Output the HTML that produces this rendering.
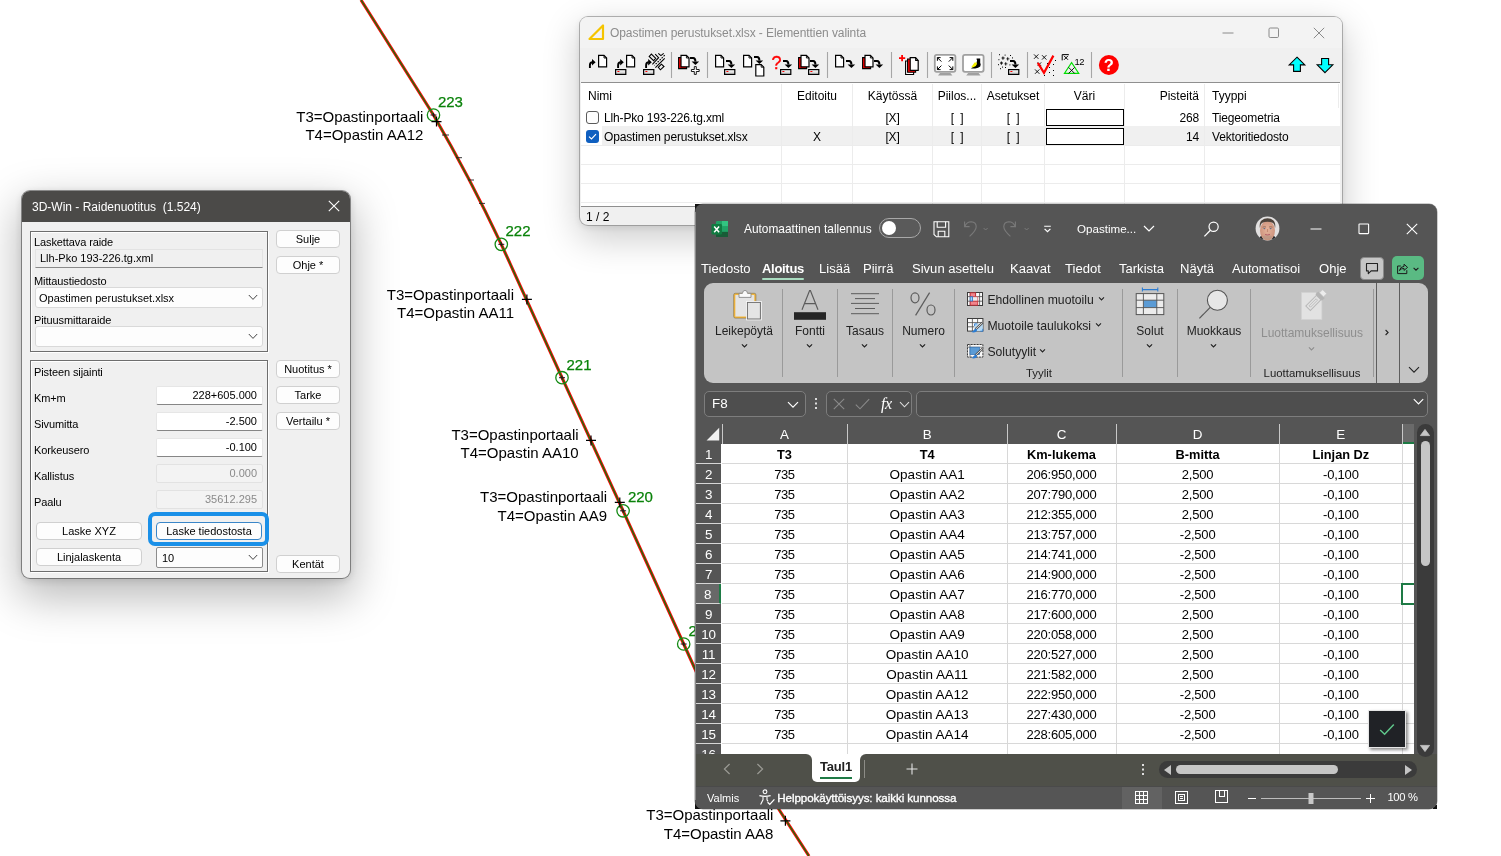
<!DOCTYPE html>
<html>
<head>
<meta charset="utf-8">
<title>3D-Win</title>
<style>
*{box-sizing:border-box;margin:0;padding:0}
html,body{width:1501px;height:856px;overflow:hidden;background:#fff;font-family:"Liberation Sans",sans-serif;}
body{position:relative}
#bg,#dlg,#tw,#xl{will-change:transform;transform:translateZ(0)}
.abs{position:absolute}
#bg{position:absolute;left:0;top:0;width:1501px;height:856px}
#bg text{font-family:"Liberation Sans",sans-serif;font-size:15px}

/* ---------- left dialog ---------- */
#dlg{position:absolute;left:22px;top:191px;width:328px;height:387px;background:#f0f0f0;border-radius:8px;
 box-shadow:0 0 0 1px rgba(60,60,60,.55),0 16px 44px 4px rgba(0,0,0,.27),0 2px 10px rgba(0,0,0,.14);overflow:hidden;font-size:11px;color:#000}
#dlg .tb{position:absolute;left:0;top:0;width:100%;height:30.6px;background:#4b4a48;color:#fff;font-size:12px;line-height:32px;padding-left:10px;white-space:pre}
#dlg .grp{position:absolute;border:1px solid #6e6e6e;box-shadow:inset 1px 1px 0 #fff, 1px 1px 0 #fff}
#dlg .lb{position:absolute;white-space:nowrap;line-height:13px;height:13px;letter-spacing:-0.1px}
#dlg .btn{position:absolute;height:18px;background:#fdfdfd;border:1px solid #d0d0d0;border-radius:4px;text-align:center;line-height:16.5px;font-size:11px;white-space:nowrap}
#dlg .inp{position:absolute;height:19px;background:#fff;border:1px solid #e6e6e6;border-bottom:1px solid #868686;border-radius:2px;text-align:right;line-height:16px;padding-right:5px;font-size:11px}
#dlg .inp.dis{background:#f3f3f3;border:1px solid #e2e2e2;color:#8a8a8a}
#dlg .ro{position:absolute;height:19px;background:#f0f0f0;border:1px solid #e3e3e3;border-bottom:1px solid #8a8a8a;line-height:16px;padding-left:4px;font-size:11px}
#dlg .cmb{position:absolute;height:21px;background:#fdfdfd;border:1px solid #d9d9d9;border-radius:3px;line-height:20px;padding-left:3px;font-size:11px}
#dlg .cmb svg{position:absolute;right:4px;top:6px}
</style>
</head>
<body>

<!-- ================= CAD background ================= -->
<svg id="bg" viewBox="0 0 1501 856">
 <g fill="none" stroke-linecap="butt" stroke-linejoin="round">
  <path id="rail" d="M361,0 L433.5,115 Q470,178 501.3,244.3 L562,377.7 L623.1,510.8 L683.7,644 L700,680 Q740,760 778,808 L809,856" stroke="#fa0808" stroke-width="3.1"/>
  <path d="M361,0 L433.5,115 Q470,178 501.3,244.3 L562,377.7 L623.1,510.8 L683.7,644 L700,680 Q740,760 778,808 L809,856" stroke="#0a7a0a" stroke-width="1.25"/>
 </g>
 <g fill="none" stroke="#138a13" stroke-width="1.3">
  <circle cx="433.5" cy="115" r="6.2"/><circle cx="501.3" cy="244.3" r="6.2"/><circle cx="562" cy="377.7" r="6.2"/><circle cx="623.1" cy="510.8" r="6.2"/><circle cx="683.7" cy="644" r="6.2"/>
 </g>
 <g stroke="#1a1a1a" stroke-width="1">
  <path d="M430.5,115h6M498.3,244.3h6M559,377.7h6M620.1,510.8h6M680.7,644h6M433.5,113v4M501.3,242.3v4M562,375.7v4M623.1,508.8v4M683.7,642v4"/>
 </g>
 <g fill="#0a820a" stroke="#0a820a" stroke-width="0.25">
  <text x="437.9" y="107">223</text><text x="505.5" y="236.2">222</text><text x="566.5" y="369.5">221</text><text x="627.9" y="502.4">220</text><text x="688.4" y="636">219</text>
 </g>
 <g stroke="#000" stroke-width="1.2">
  <path d="M431.5,121.6h10M436.5,116.6v10 M521.9,299.4h10M526.9,294.4v10 M586,440.4h10M591,435.4v10 M614.8,502.4h10M619.8,497.4v10 M780.4,820.8h10M785.4,815.8v10"/>
 </g>
 <g stroke="#222" stroke-width="0.9">
  <path d="M442,135h7M456,157.7h6M468,180h6M479,203.4h6"/>
 </g>
 <g fill="#000" text-anchor="end">
  <text x="423.4" y="121.6">T3=Opastinportaali</text><text x="423.4" y="139.6">T4=Opastin AA12</text>
  <text x="514" y="299.6">T3=Opastinportaali</text><text x="514" y="317.6">T4=Opastin AA11</text>
  <text x="578.6" y="439.9">T3=Opastinportaali</text><text x="578.6" y="457.7">T4=Opastin AA10</text>
  <text x="607.2" y="502.4">T3=Opastinportaali</text><text x="607.2" y="520.5">T4=Opastin AA9</text>
  <text x="773.4" y="820.4">T3=Opastinportaali</text><text x="773.4" y="838.7">T4=Opastin AA8</text>
 </g>
</svg>

<!-- ================= Left dialog: Raidenuotitus ================= -->
<div id="dlg">
 <div class="tb">3D-Win - Raidenuotitus  (1.524)</div>
 <svg class="abs" style="left:306px;top:9px" width="12" height="12" viewBox="0 0 12 12"><path d="M0.8,0.8L11.2,11.2M11.2,0.8L0.8,11.2" stroke="#fff" stroke-width="1.1" fill="none"/></svg>

 <div class="grp" style="left:8px;top:40px;width:238px;height:121px"></div>
 <div class="lb" style="left:12px;top:45px">Laskettava raide</div>
 <div class="ro" style="left:13px;top:58px;width:228px">Llh-Pko 193-226.tg.xml</div>
 <div class="lb" style="left:12px;top:84px">Mittaustiedosto</div>
 <div class="cmb" style="left:13px;top:96px;width:228px">Opastimen perustukset.xlsx<svg width="10" height="7" viewBox="0 0 10 7"><path d="M0.8,1L5,5.4L9.2,1" stroke="#444" stroke-width="1" fill="none"/></svg></div>
 <div class="lb" style="left:12px;top:123px">Pituusmittaraide</div>
 <div class="cmb" style="left:13px;top:135px;width:228px"><svg width="10" height="7" viewBox="0 0 10 7"><path d="M0.8,1L5,5.4L9.2,1" stroke="#444" stroke-width="1" fill="none"/></svg></div>

 <div class="btn" style="left:254px;top:39px;width:64px">Sulje</div>
 <div class="btn" style="left:254px;top:65px;width:64px">Ohje *</div>

 <div class="grp" style="left:8px;top:169px;width:238px;height:212px"></div>
 <div class="lb" style="left:12px;top:175px">Pisteen sijainti</div>
 <div class="lb" style="left:12px;top:201px">Km+m</div>
 <div class="lb" style="left:12px;top:227px">Sivumitta</div>
 <div class="lb" style="left:12px;top:253px">Korkeusero</div>
 <div class="lb" style="left:12px;top:279px">Kallistus</div>
 <div class="lb" style="left:12px;top:305px">Paalu</div>
 <div class="inp" style="left:134px;top:195px;width:107px">228+605.000</div>
 <div class="inp" style="left:134px;top:221px;width:107px">-2.500</div>
 <div class="inp" style="left:134px;top:247px;width:107px">-0.100</div>
 <div class="inp dis" style="left:134px;top:273px;width:107px">0.000</div>
 <div class="inp dis" style="left:134px;top:299px;width:107px">35612.295</div>

 <div class="btn" style="left:14px;top:331px;width:106px">Laske XYZ</div>
 <div class="abs" style="left:126px;top:321px;width:121px;height:34px;border:4px solid #1a90e8;border-radius:7px;background:#f0f0f0"></div>
 <div class="btn" style="left:134px;top:331px;width:106px;border-color:#3a86c8">Laske tiedostosta</div>
 <div class="btn" style="left:14px;top:357px;width:106px">Linjalaskenta</div>
 <div class="cmb" style="left:134px;top:356px;width:107px;border-color:#8c8c8c;border-radius:2px;padding-left:5px">10<svg width="10" height="7" viewBox="0 0 10 7"><path d="M0.8,1L5,5.4L9.2,1" stroke="#444" stroke-width="1" fill="none"/></svg></div>

 <div class="btn" style="left:254px;top:169px;width:64px">Nuotitus *</div>
 <div class="btn" style="left:254px;top:195px;width:64px">Tarke</div>
 <div class="btn" style="left:254px;top:221px;width:64px">Vertailu *</div>
 <div class="btn" style="left:254px;top:364px;width:64px">Kentät</div>
</div>

<!-- ================= Top window: Elementtien valinta ================= -->
<style>
#tw{position:absolute;left:580px;top:17px;width:762px;height:208px;background:#f0f0f0;border-radius:8px;
 box-shadow:0 0 0 1px rgba(120,120,120,.55),0 12px 36px 2px rgba(0,0,0,.20),0 2px 8px rgba(0,0,0,.10);overflow:hidden;font-size:12px;color:#000}
#tw .tb{position:absolute;left:0;top:0;width:100%;height:31px;background:#f3f3f3;color:#8c8c8c;font-size:12px;line-height:33px;padding-left:30px;white-space:pre;letter-spacing:-0.07px}
#tw .lv{position:absolute;left:1px;top:65px;width:759px;height:125px;background:#fff;border-top:1px solid #8f8f8f;border-bottom:1px solid #8f8f8f}
#tw .hd,#tw .c{position:absolute;white-space:nowrap;line-height:16px;height:16px;font-size:12px}
#tw .c{letter-spacing:-0.15px}
#tw .vl{position:absolute;top:1px;width:1px;height:123px;background:#ececec}
#tw .hl{position:absolute;left:0;width:759px;height:1px;background:#ececec}
#tw .sep{position:absolute;top:42px;width:1px;height:26px;background:#a8a8a8}
#tw .ic{position:absolute;top:36px}
</style>
<div id="tw">
 <div class="tb">Opastimen perustukset.xlsx - Elementtien valinta</div>
 <svg class="abs" style="left:8px;top:7px" width="17" height="17" viewBox="0 0 17 17"><path d="M15,1.5V15H1.5Z" fill="none" stroke="#f5c400" stroke-width="2.2" stroke-linejoin="round"/></svg>
 <svg class="abs" style="left:642px;top:10px" width="12" height="12" viewBox="0 0 12 12"><path d="M0.5,6H11.5" stroke="#8a8a8a" stroke-width="1" fill="none"/></svg>
 <svg class="abs" style="left:688px;top:10px" width="12" height="12" viewBox="0 0 12 12"><rect x="1" y="1" width="9.5" height="9.5" rx="1.2" stroke="#8a8a8a" stroke-width="1" fill="none"/></svg>
 <svg class="abs" style="left:733px;top:10px" width="12" height="12" viewBox="0 0 12 12"><path d="M0.8,0.8L11.2,11.2M11.2,0.8L0.8,11.2" stroke="#8a8a8a" stroke-width="1" fill="none"/></svg>

 <svg class="abs" style="left:0;top:0" width="762" height="208" viewBox="580 17 762 208">
  <defs>
   <linearGradient id="drv" x1="0" y1="0" x2="0" y2="1"><stop offset="0" stop-color="#fff"/><stop offset="1" stop-color="#c4c4c4"/></linearGradient>
   <g id="pg"><path d="M0.6,0.6h5.4l2.6,2.6v8.8h-8z" fill="#fff" stroke="#000" stroke-width="1.2" stroke-linejoin="miter"/><path d="M6,0.6v2.6h2.6" fill="none" stroke="#000" stroke-width="0.9"/></g>
   <g id="pg2"><path d="M0.6,2.8h8v11h-8z" fill="#ff0000" stroke="#000" stroke-width="1.1"/><use href="#pg" x="2.4" y="0"/></g>
   <g id="dr"><rect x="0.6" y="0.6" width="10.2" height="4.8" fill="url(#drv)" stroke="#000" stroke-width="1.2"/><path d="M2.4,2.5h2" stroke="#ff0000" stroke-width="1"/></g>
   <g id="aUR"><path d="M1.7,9.6V6.8Q1.7,3.9 4.4,3.9" fill="none" stroke="#000" stroke-width="1.9"/><path d="M3.8,0.7L7.4,3.9L3.8,7.1z" fill="#000"/></g>
   <g id="aRD"><path d="M0,1H3.2Q5.4,1 5.4,4.6" fill="none" stroke="#000" stroke-width="2"/><path d="M1.6,4.4H9.2L5.4,8z" fill="#000"/></g>
  </defs>
  <g stroke="#a6a6a6" stroke-width="1.1"><path d="M671.5,52v26M707.5,52v26M827.5,52v26M891.5,52v26M927.5,52v26M991.5,52v26M1027.5,52v26M1091.5,52v26"/></g>
  <!-- 1 -->
  <use href="#aUR" x="588.2" y="58.4"/><use href="#pg" x="598" y="54.8"/>
  <!-- 2 -->
  <use href="#aUR" x="616.4" y="58.4"/><use href="#pg" x="626" y="54.8"/><use href="#dr" x="615" y="69"/>
  <!-- 3 -->
  <use href="#aUR" x="644.4" y="58.4"/><use href="#dr" x="643" y="69"/>
  <g stroke="#000" stroke-width="1.1" fill="none"><path d="M651.4,54.1L655.7,58.3L653.6,60.6L649.2,56.4z M655.2,54.1L658.6,57.7L652.4,64.4 M658.3,53.3L660.9,55.6L663.7,53.3 M664.7,58.3L655.4,67.7 M661.4,64.2L664,66.5L660.4,69.8L658.3,67.3z"/><path d="M664.7,55.2L654.4,65.4" stroke-dasharray="1.6 1.2"/></g>
  <!-- 4 -->
  <use href="#pg2" x="678" y="54.8"/><use href="#aRD" x="690" y="57"/>
  <path d="M694.3,66.6h2v2.9h2.9v2h-2.9v2.9h-2v-2.9h-2.9v-2h2.9z" fill="#fff" stroke="#000" stroke-width="0.9"/>
  <!-- 5 -->
  <use href="#pg" x="715" y="54.8"/><use href="#aRD" x="726" y="60"/><use href="#dr" x="724" y="69"/>
  <!-- 6 -->
  <use href="#pg" x="743" y="54.8"/><use href="#aRD" x="754" y="56"/><use href="#pg" x="755.2" y="64"/>
  <!-- 7 -->
  <text x="771.4" y="68.8" font-family="Liberation Sans" font-size="18" fill="#ff0000" stroke="#ff0000" stroke-width="0.35">?</text>
  <use href="#aRD" x="783" y="60"/><use href="#dr" x="780" y="69"/>
  <!-- 8 -->
  <use href="#pg2" x="798" y="54.8"/><use href="#aRD" x="810" y="60"/><use href="#dr" x="808" y="69"/>
  <!-- 9 -->
  <use href="#pg" x="835" y="54.8"/><use href="#aRD" x="846" y="60"/>
  <!-- 10 -->
  <use href="#pg2" x="862" y="54.8"/><use href="#aRD" x="874" y="60"/>
  <!-- 11 -->
  <path d="M899,58.1h6.2M902.1,55v6.2" stroke="#ff0000" stroke-width="1.8"/>
  <path d="M905.6,61h8v13.5h-8z" fill="#fff" stroke="#000" stroke-width="1.1"/>
  <path d="M907.6,59h8v13.3h-8z" fill="#ff0000" stroke="#000" stroke-width="1.1"/>
  <g transform="translate(909.6,57) scale(1,1.12)"><use href="#pg"/></g>
  <!-- 12 monitor -->
  <g>
   <rect x="934.8" y="54.8" width="20.6" height="17" rx="2" fill="#fff" stroke="#a0a0a0" stroke-width="1.8"/><path d="M940,73h10.4l2,2.6h-14.4z" fill="#a0a0a0"/>
   <g stroke="#000" stroke-width="1" fill="none"><path d="M937.4,57.6l4,4M937.4,60.8v-3.2h3.2 M952.8,57.6l-4,4M949.6,57.6h3.2v3.2 M937.4,69.6l4,-4M937.4,66.4v3.2h3.2 M952.8,69.6l-4,-4M952.8,66.4v3.2h-3.2"/></g>
  </g>
  <!-- 13 monitor -->
  <g>
   <rect x="963" y="54.8" width="20.6" height="17" rx="2" fill="#fff" stroke="#a0a0a0" stroke-width="1.8"/><path d="M968.2,73h10.4l2,2.6h-14.4z" fill="#a0a0a0"/>
   <path d="M966.4,68.4h4.6q2.6,-1.4 3.4,-5h2.2v-4.8h3.6v4.2q1,1.4 0,3.8q-2,2 -5.6,1.8z" fill="#000"/>
   <path d="M971.2,67.2l3.4,-4.6h2l0.4,1.4q-0.6,2.2 -3.6,3.2z" fill="#f4f000"/>
   <rect x="975.2" y="59.8" width="1.8" height="1.8" fill="#fff"/>
  </g>
  <!-- 14 -->
  <g fill="#000"><path d="M1001.6,57.6h0.9v-1.2h0.9v1.2h1.2v0.9h-1.2v1.2h-0.9v-1.2h-0.9zM1006.4,58.4h0.9v-1.2h0.9v1.2h1.2v0.9h-1.2v1.2h-0.9v-1.2h-0.9zM1000,62.6h0.9v-1.2h0.9v1.2h1.2v0.9h-1.2v1.2h-0.9v-1.2h-0.9zM1004.4,63.4h0.9v-1.2h0.9v1.2h1.2v0.9h-1.2v1.2h-0.9v-1.2h-0.9z"/>
   <rect x="999" y="54.2" width="1" height="1"/><rect x="1004.6" y="54.6" width="1" height="1"/><rect x="1010" y="55" width="1" height="1"/><rect x="1012" y="57.4" width="1" height="1"/><rect x="998.4" y="59.2" width="1" height="1"/><rect x="998" y="64.2" width="1" height="1"/><rect x="1002" y="66.6" width="1" height="1"/><rect x="1005" y="67" width="1" height="1"/><rect x="1000" y="68.2" width="1" height="1"/><rect x="1009.4" y="64.4" width="1" height="1"/></g>
  <use href="#aRD" x="1010" y="60"/><use href="#dr" x="1008" y="69"/>
  <!-- 15 -->
  <g stroke="#000" stroke-width="0.9" fill="none"><path d="M1034,54.4l4.4,4.4M1038.4,54.4l-4.4,4.4 M1042,55.2l4.4,4.4M1046.4,55.2l-4.4,4.4 M1035,69.4l4.4,4.4M1039.4,69.4l-4.4,4.4 M1037.6,62.4l3.6,3.6M1041.2,62.4l-3.6,3.6"/></g>
  <g fill="#000"><rect x="1055" y="60" width="1" height="1"/><rect x="1053" y="64" width="1" height="1"/><rect x="1049" y="67" width="1" height="1"/><rect x="1053" y="70" width="1" height="1"/><rect x="1049" y="72" width="1" height="1"/><rect x="1044" y="75" width="1" height="1"/><rect x="1053" y="75" width="1" height="1"/><rect x="1047" y="63" width="1" height="1"/></g>
  <path d="M1037.8,62.8L1044,72.8L1053.4,55.6" fill="none" stroke="#ff0000" stroke-width="2.2" stroke-linejoin="miter"/>
  <!-- 16 -->
  <path d="M1062.2,60.4v-5.8h6.6" fill="none" stroke="#000" stroke-width="1"/>
  <path d="M1064,55.8l4,4M1068,55.8l-4,4" stroke="#000" stroke-width="1" fill="none"/>
  <path d="M1071.6,62.6L1078.8,73.4H1064.4z" fill="none" stroke="#00e000" stroke-width="1.1"/>
  <path d="M1068.6,67.4l6,6M1074.6,67.4l-6,6" stroke="#000" stroke-width="0.9" fill="none"/>
  <text x="1074.6" y="64.8" font-family="Liberation Sans" font-size="9.4" letter-spacing="-0.6" fill="#000">12</text>
  <!-- help -->
  <circle cx="1108.9" cy="65" r="10" fill="#ff0000"/>
  <text x="1108.9" y="71" text-anchor="middle" font-family="Liberation Sans" font-weight="700" font-size="16.5" fill="#fff">?</text>
  <!-- arrows -->
  <path d="M1297,57.2L1304.8,64.9H1300.4V71.4H1293.6V64.9H1289.2z" fill="#00ffff" stroke="#000" stroke-width="1.1" stroke-linejoin="miter"/>
  <path d="M1325,72.6L1332.8,64.8H1328.6V58.5H1321.6V64.8H1317.2z" fill="#00ffff" stroke="#000" stroke-width="1.1" stroke-linejoin="miter"/>
 </svg>


 <div class="lv">
  <div class="abs" style="left:0;top:43px;width:759px;height:20px;background:#f0f0f0"></div><div class="abs" style="left:0;top:43px;width:21px;height:20px;background:#fff"></div>
  <div class="vl" style="left:200px"></div><div class="vl" style="left:271px"></div><div class="vl" style="left:351px"></div><div class="vl" style="left:400px"></div><div class="vl" style="left:463px"></div><div class="vl" style="left:543px"></div><div class="vl" style="left:623px"></div><div class="vl" style="left:757px;height:24px"></div>
  <div class="hl" style="top:62px"></div><div class="hl" style="top:81px"></div><div class="hl" style="top:100px"></div><div class="hl" style="top:119px"></div>

  <div class="hd" style="left:7px;top:5px">Nimi</div>
  <div class="hd" style="left:201px;top:5px;width:70px;text-align:center">Editoitu</div>
  <div class="hd" style="left:272px;top:5px;width:79px;text-align:center">Käytössä</div>
  <div class="hd" style="left:352px;top:5px;width:48px;text-align:center">Piilos...</div>
  <div class="hd" style="left:401px;top:5px;width:62px;text-align:center">Asetukset</div>
  <div class="hd" style="left:464px;top:5px;width:79px;text-align:center">Väri</div>
  <div class="hd" style="left:544px;top:5px;width:74px;text-align:right">Pisteitä</div>
  <div class="hd" style="left:631px;top:5px">Tyyppi</div>

  <!-- row 1 -->
  <div class="abs" style="left:5px;top:28px;width:13px;height:13px;border:1px solid #5a5a5a;border-radius:3px;background:#fdfdfd"></div>
  <div class="c" style="left:23px;top:27px">Llh-Pko 193-226.tg.xml</div>
  <div class="c" style="left:272px;top:27px;width:79px;text-align:center">[X]</div>
  <div class="c" style="left:352px;top:27px;width:48px;text-align:center">[&nbsp; ]</div>
  <div class="c" style="left:401px;top:27px;width:62px;text-align:center">[&nbsp; ]</div>
  <div class="abs" style="left:465px;top:26px;width:78px;height:17px;border:1px solid #000;background:#fff;box-shadow:inset 0 0 0 0 #000"></div>
  <div class="c" style="left:544px;top:27px;width:74px;text-align:right">268</div>
  <div class="c" style="left:631px;top:27px">Tiegeometria</div>
  <!-- row 2 -->
  <div class="abs" style="left:5px;top:47px;width:13px;height:13px;border-radius:3px;background:#0f5fc0"></div>
  <svg class="abs" style="left:5px;top:47px" width="13" height="13" viewBox="0 0 13 13"><path d="M3,6.6L5.5,9L10,4.2" stroke="#fff" stroke-width="1.1" fill="none"/></svg>
  <div class="c" style="left:23px;top:46px">Opastimen perustukset.xlsx</div>
  <div class="c" style="left:201px;top:46px;width:70px;text-align:center">X</div>
  <div class="c" style="left:272px;top:46px;width:79px;text-align:center">[X]</div>
  <div class="c" style="left:352px;top:46px;width:48px;text-align:center">[&nbsp; ]</div>
  <div class="c" style="left:401px;top:46px;width:62px;text-align:center">[&nbsp; ]</div>
  <div class="abs" style="left:465px;top:45px;width:78px;height:17px;border:1px solid #000;background:#fff"></div>
  <div class="c" style="left:544px;top:46px;width:74px;text-align:right">14</div>
  <div class="c" style="left:631px;top:46px">Vektoritiedosto</div>
 </div>
 <div class="c" style="left:6px;top:192px;font-size:12px;letter-spacing:0">1 / 2</div>
</div>


<!-- ================= Excel window ================= -->
<style>
#xl{position:absolute;left:695px;top:204px;width:742px;height:605px;background:#555555;border-radius:8px 8px 8px 8px;overflow:hidden;color:#fff;font-size:12px;
 box-shadow:0 0 0 0.5px rgba(60,60,60,.5)}
#xl .t{position:absolute;white-space:nowrap;line-height:16px;height:16px}
#xl .tab{position:absolute;top:56px;font-size:13.05px;line-height:18px;height:18px;white-space:nowrap;color:#fff}
#rb{position:absolute;left:9px;top:79px;width:724px;height:100px;background:#c4c4c4;border-radius:9px;color:#1f1f1f;overflow:hidden}
#rb .sp{position:absolute;top:6px;width:1px;height:88px;background:#9a9a9a}
#rb .bl{position:absolute;font-size:12px;line-height:16px;height:16px;white-space:nowrap;text-align:center;color:#222}
#rb .sm{position:absolute;font-size:12.2px;line-height:16px;height:16px;white-space:nowrap;color:#222}
#rb .gl{position:absolute;font-size:11.4px;line-height:14px;height:14px;white-space:nowrap;color:#222;text-align:center}
#grid{position:absolute;left:1px;top:220px;width:718px;height:330px;background:#fff;overflow:hidden;color:#000}
#grid .ch{position:absolute;top:0;height:20px;background:#555555;color:#fff;font-size:13.4px;line-height:22px;text-align:center}
#grid .rh{position:absolute;left:0;width:25px;letter-spacing:-0.3px;height:20px;background:#555555;color:#fff;font-size:13.4px;line-height:21px;text-align:center;border-bottom:1px solid #d6d6d6}
#grid .cl{position:absolute;height:20px;font-size:13.5px;line-height:22px;text-align:center;white-space:nowrap;color:#000}
#grid .b{font-weight:700;font-size:12.8px}
#grid .n{font-size:13px;letter-spacing:-0.2px}
#grid .na{font-size:13px;letter-spacing:-0.4px}
#grid .vg{position:absolute;width:1px;background:#d8d8d8;top:20px;height:320px}
#grid .hg{position:absolute;height:1px;background:#d8d8d8;left:25.5px;width:693px}
</style>
<div class="abs" style="left:694.5px;top:203.5px;width:8px;height:8px;background:#111"></div><div class="abs" style="left:1432.5px;top:804.5px;width:4.6px;height:4.4px;background:#111"></div><div class="abs" style="left:694.6px;top:802px;width:6px;height:7px;background:#111"></div>
<div id="xl">
<!-- title bar -->
<div class="abs" style="left:0;top:8px;width:1px;height:588px;background:#8a8a8a;z-index:5"></div>
<svg class="abs" style="left:16px;top:16px" width="18" height="18" viewBox="0 0 18 18">
 <rect x="5" y="1" width="12" height="16" rx="1.2" fill="#21a366"/><rect x="11" y="1" width="6" height="5.3" fill="#33c481"/><rect x="5" y="6.3" width="6" height="5.3" fill="#107c41"/><rect x="11" y="11.6" width="6" height="5.4" fill="#185c37"/><rect x="5" y="11.6" width="6" height="5.4" fill="#185c37"/><rect x="11" y="6.3" width="6" height="5.3" fill="#21a366"/>
 <rect x="0.5" y="4" width="10.5" height="10.5" rx="1.2" fill="#107c41"/><path d="M3.2,6.4l4.9,5.8M8.1,6.4l-4.9,5.8" stroke="#fff" stroke-width="1.5" fill="none"/>
</svg>
<div class="t" style="left:49px;top:17px;font-size:11.9px">Automaattinen tallennus</div>
<div class="abs" style="left:184px;top:14px;width:42px;height:20px;border:1px solid #a8a8a8;border-radius:10px;background:#5a5a5a"></div>
<div class="abs" style="left:187px;top:17px;width:14px;height:14px;border-radius:7px;background:#fff"></div>
<svg class="abs" style="left:238px;top:17px" width="17" height="17" viewBox="0 0 17 17"><g fill="none" stroke="#fff" stroke-width="1.1"><path d="M1,0.8h14.8v15h-12.4l-2.4,-2.4z"/><path d="M4.2,0.8v5.4h8.4v-5.4M5.2,15.8v-5.6h6.6v5.6"/></g></svg>
<svg class="abs" style="left:267px;top:15px" width="30" height="20" viewBox="0 0 30 20"><g fill="none" stroke="#7a7a7a" stroke-width="1.1"><path d="M2.6,2.6v5h5"/><path d="M2.8,7.4q2,-4.6 6.4,-4.6q5,0.4 5,5q0,3.6 -6.6,9.6"/><path d="M21.6,9l2,2l2,-2" stroke-width="1"/></g></svg>
<svg class="abs" style="left:306px;top:15px" width="32" height="20" viewBox="0 0 32 20"><g fill="none" stroke="#7a7a7a" stroke-width="1.1"><path d="M14.4,2.6v5h-5"/><path d="M14.2,7.4q-2,-4.6 -6.4,-4.6q-5,0.4 -5,5q0,3.6 6.6,9.6"/><path d="M23.6,9l2,2l2,-2" stroke-width="1"/></g></svg>
<svg class="abs" style="left:347px;top:19px" width="11" height="11" viewBox="0 0 11 11"><path d="M2.2,3.2h6.6" stroke="#fff" stroke-width="1.1" fill="none"/><path d="M2.6,5.8l2.9,2.9l2.9,-2.9" stroke="#fff" stroke-width="1.2" fill="none"/></svg>
<div class="t" style="left:382px;top:17px;font-size:11.6px">Opastime...</div>
<svg class="abs" style="left:448px;top:21px" width="12" height="8" viewBox="0 0 12 8"><path d="M1,1l5,5l5,-5" stroke="#fff" stroke-width="1.2" fill="none"/></svg>
<svg class="abs" style="left:508px;top:16px" width="18" height="18" viewBox="0 0 18 18"><circle cx="10.6" cy="6.8" r="4.6" fill="none" stroke="#fff" stroke-width="1.2"/><path d="M7.4,10.2L1.4,16.4" stroke="#fff" stroke-width="1.3"/></svg>
<!-- avatar -->
<svg class="abs" style="left:560.4px;top:12.2px" width="25" height="25" viewBox="0 0 25 25"><defs><clipPath id="avc"><circle cx="12.5" cy="12.5" r="11.9"/></clipPath><radialGradient id="avf" cx="0.5" cy="0.45" r="0.6"><stop offset="0" stop-color="#e6b49c"/><stop offset="1" stop-color="#c98e78"/></radialGradient></defs>
 <g clip-path="url(#avc)"><rect width="25" height="25" fill="#e2e0e0"/>
 <path d="M2,25L6.4,19.2L9,25zM23,25L18.6,19.2L16,25z" fill="#1e2226"/>
 <ellipse cx="12.5" cy="14.8" rx="7.5" ry="10" fill="url(#avf)"/>
 <path d="M4.9,12q-0.8,-5 1.6,-7.4q2.6,-2.4 6,-2.4q3.6,0 6,2.2q2.4,2.6 1.6,7.6q-0.6,-3.8 -2,-5q-2.6,-1.2 -5.6,-1.2q-3,0 -5.6,1.2q-1.4,1.2 -2,5z" fill="#4d433b"/>
 <path d="M7.6,11.2q1.6,-0.8 3.4,-0.2M14,11q1.8,-0.6 3.4,0.2" stroke="#7a5a4a" stroke-width="0.7" fill="none"/>
 <ellipse cx="9.4" cy="12.6" rx="1" ry="0.7" fill="#5b6b8a"/><ellipse cx="15.6" cy="12.6" rx="1" ry="0.7" fill="#5b6b8a"/>
 <path d="M12.5,13v3" stroke="#c48a74" stroke-width="1.2"/>
 <ellipse cx="12.5" cy="21.4" rx="4.6" ry="2.2" fill="#a89488" opacity="0.45"/>
 <path d="M10,18.5q2.5,0.9 5,0" stroke="#b4626a" stroke-width="1" fill="none"/>
 </g></svg>
<svg class="abs" style="left:615px;top:19px" width="12" height="12" viewBox="0 0 12 12"><path d="M0.5,6H11.5" stroke="#fff" stroke-width="1.1"/></svg>
<svg class="abs" style="left:663px;top:19px" width="12" height="12" viewBox="0 0 12 12"><rect x="1" y="1" width="9.6" height="9.6" rx="0.6" stroke="#fff" stroke-width="1.1" fill="none"/></svg>
<svg class="abs" style="left:711px;top:19px" width="12" height="12" viewBox="0 0 12 12"><path d="M0.8,0.8L11.2,11.2M11.2,0.8L0.8,11.2" stroke="#fff" stroke-width="1.1" fill="none"/></svg>

<!-- tabs -->
<div class="tab" style="left:6px">Tiedosto</div>
<div class="tab" style="left:67px;font-weight:700;font-size:13px;letter-spacing:-0.3px">Aloitus</div>
<div class="abs" style="left:67px;top:74px;width:42px;height:2px;background:#a9dcc0;border-radius:1px"></div>
<div class="tab" style="left:124px">Lisää</div>
<div class="tab" style="left:168px">Piirrä</div>
<div class="tab" style="left:217px">Sivun asettelu</div>
<div class="tab" style="left:315px">Kaavat</div>
<div class="tab" style="left:370px">Tiedot</div>
<div class="tab" style="left:424px">Tarkista</div>
<div class="tab" style="left:485px">Näytä</div>
<div class="tab" style="left:537px">Automatisoi</div>
<div class="tab" style="left:624px">Ohje</div>
<div class="abs" style="left:665px;top:53px;width:24px;height:23px;background:#c6c6c6;border:1px solid #8a8a8a;border-radius:4px"></div>
<svg class="abs" style="left:670px;top:58px" width="14" height="14" viewBox="0 0 14 14"><path d="M1.5,1.5h11v7.4h-6.4l-2.8,2.8v-2.8h-1.8z" fill="none" stroke="#222" stroke-width="1.1" stroke-linejoin="round"/></svg>
<div class="abs" style="left:697px;top:52px;width:32px;height:24px;background:#5aba83;border-radius:5px"></div>
<svg class="abs" style="left:701px;top:57px" width="26" height="15" viewBox="0 0 26 15"><g fill="none" stroke="#1c1c1c" stroke-width="1"><path d="M4.8,5H1.6v7.6h9.2V9.2"/><path d="M3.4,9.6Q4.2,5.6 8,5.4V3.2l3.6,3.2L8,9.4V7.4Q5,7.4 3.4,9.6z" stroke-linejoin="round"/><path d="M17.6,6.8l2.4,2.4l2.4,-2.4" stroke-width="1.1"/></g></svg>

<!-- ribbon -->
<div id="rb">
 <div class="sp" style="left:78px"></div><div class="sp" style="left:133px"></div><div class="sp" style="left:188px"></div><div class="sp" style="left:250px"></div><div class="sp" style="left:418px"></div><div class="sp" style="left:473px"></div><div class="sp" style="left:546px"></div><div class="sp" style="left:669px"></div>
 <!-- Leikepöytä -->
 <svg class="abs" style="left:28px;top:5px" width="32" height="34" viewBox="0 0 32 34">
  <rect x="2.6" y="6.2" width="20.4" height="23" rx="1" fill="#e4e4e4" stroke="#f3b73f" stroke-width="1.5"/>
  <rect x="1.7" y="5.3" width="22.2" height="24.8" rx="1.6" fill="none" stroke="#7a5a16" stroke-width="0.5"/>
  <path d="M7,9.4v-4h3.4q0.4,-3 2.6,-3q2.2,0 2.6,3h3.4v4z" fill="#fafafa" stroke="#8a8a8a" stroke-width="0.9"/>
  <rect x="15.4" y="14.4" width="13" height="16.6" fill="#e4e4e4" stroke="#fff" stroke-width="2.6"/>
  <rect x="15.4" y="14.4" width="13" height="16.6" fill="#e4e4e4" stroke="#6e6e6e" stroke-width="1"/>
 </svg>
 <div class="bl" style="left:2px;top:40px;width:76px">Leikepöytä</div>
 <svg class="abs" style="left:36px;top:60px" width="9" height="6" viewBox="0 0 9 6"><path d="M1.9,1.4l2.6,2.6l2.6,-2.6" stroke="#222" stroke-width="1.2" fill="none"/></svg>
 <!-- Fontti -->
 <svg class="abs" style="left:88px;top:5px" width="36" height="34" viewBox="0 0 36 34"><path d="M10,21.8L17.6,2.6h0.8L26,21.8M12.6,15.6h10.8" fill="none" stroke="#5c5c5c" stroke-width="1.2"/><rect x="2" y="24.2" width="32" height="7.6" fill="#262626"/></svg>
 <div class="bl" style="left:79px;top:40px;width:54px">Fontti</div>
 <svg class="abs" style="left:101px;top:60px" width="9" height="6" viewBox="0 0 9 6"><path d="M1.9,1.4l2.6,2.6l2.6,-2.6" stroke="#222" stroke-width="1.2" fill="none"/></svg>
 <!-- Tasaus -->
 <svg class="abs" style="left:146px;top:8px" width="30" height="24" viewBox="0 0 30 24"><path d="M1,2.7h28M5,7.6h20M1,12.4h28M5,17.5h20M1,22.7h28" stroke="#5c5c5c" stroke-width="1"/></svg>
 <div class="bl" style="left:134px;top:40px;width:54px">Tasaus</div>
 <svg class="abs" style="left:156px;top:60px" width="9" height="6" viewBox="0 0 9 6"><path d="M1.9,1.4l2.6,2.6l2.6,-2.6" stroke="#222" stroke-width="1.2" fill="none"/></svg>
 <!-- Numero -->
 <svg class="abs" style="left:205px;top:8px" width="28" height="26" viewBox="0 0 28 26"><g fill="none" stroke="#5c5c5c" stroke-width="1.2"><ellipse cx="6" cy="6.8" rx="4" ry="5"/><ellipse cx="22" cy="19" rx="4" ry="5"/><path d="M20.6,1.6L6.6,24.4"/></g></svg>
 <div class="bl" style="left:189px;top:40px;width:61px">Numero</div>
 <svg class="abs" style="left:214px;top:60px" width="9" height="6" viewBox="0 0 9 6"><path d="M1.9,1.4l2.6,2.6l2.6,-2.6" stroke="#222" stroke-width="1.2" fill="none"/></svg>
 <!-- Tyylit -->
 <svg class="abs" style="left:263px;top:9px" width="16" height="14" viewBox="0 0 16 14"><rect x="0.5" y="0.5" width="15" height="13" fill="#fafafa" stroke="#3c3c3c" stroke-width="1"/><path d="M3.2,0.5v13M8.6,0.5v13M12.6,0.5v13M0.5,4.6h15M0.5,9.2h15" stroke="#4a4a4a" stroke-width="0.8" fill="none"/><rect x="3.2" y="0.8" width="5.4" height="3.8" fill="#f0858c" stroke="#c4262e" stroke-width="0.8"/><rect x="3.2" y="9.2" width="7.6" height="4" fill="#f0858c" stroke="#c4262e" stroke-width="0.8"/><rect x="5.6" y="4.8" width="5.2" height="4.2" fill="#ececec" stroke="#d05058" stroke-width="0.7"/><rect x="3.2" y="4.8" width="2.4" height="4.2" fill="#a8d2f2" stroke="#2b7cd3" stroke-width="0.8"/></svg>
 <div class="sm" style="left:283.4px;top:9px">Ehdollinen muotoilu</div>
 <svg class="abs" style="left:393px;top:13px" width="9" height="6" viewBox="0 0 9 6"><path d="M2,1.4l2.5,2.5l2.5,-2.5" stroke="#222" stroke-width="1.1" fill="none"/></svg>
 <svg class="abs" style="left:263px;top:35px" width="17" height="15" viewBox="0 0 17 15"><rect x="0.5" y="0.5" width="15.4" height="12.6" fill="#fafafa" stroke="#3c3c3c" stroke-width="1"/><path d="M0.5,4.6h15.4M0.5,8.8h7M5.4,0.5v12.6M10.6,0.5v5" stroke="#4a4a4a" stroke-width="0.8" fill="none"/><rect x="7.6" y="5.8" width="8.2" height="7.4" fill="#b6daf6"/><path d="M13.4,13.2h2.4v-2.4M7.6,8v-2.2h2.4" stroke="#2b7cd3" stroke-width="0.9" fill="none"/><path d="M15.6,4.6L8.4,11.4" stroke="#555" stroke-width="2.2"/><path d="M15.4,4.8L8.6,11.2" stroke="#e8e8e8" stroke-width="0.9"/><path d="M8.6,10.6q-1,0.2 -1.6,1.4q-0.8,1.6 -3,1.8q2.6,1.2 4.8,0.2q1.4,-0.8 1.2,-2.2z" fill="#2b7cd3"/></svg>
 <div class="sm" style="left:283.4px;top:35px">Muotoile taulukoksi</div>
 <svg class="abs" style="left:390px;top:39px" width="9" height="6" viewBox="0 0 9 6"><path d="M2,1.4l2.5,2.5l2.5,-2.5" stroke="#222" stroke-width="1.1" fill="none"/></svg>
 <svg class="abs" style="left:263px;top:61px" width="17" height="15" viewBox="0 0 17 15"><rect x="0.5" y="0.5" width="15.4" height="12.6" fill="#fafafa" stroke="#3c3c3c" stroke-width="1" stroke-dasharray="2.2 0.8"/><path d="M0.5,3.2h15.4M3,0.5v12.6" stroke="#4a4a4a" stroke-width="0.7" fill="none"/><rect x="3" y="3.2" width="9.6" height="7.4" fill="#5b9bd5" stroke="#2f6fb5" stroke-width="0.7"/><path d="M15.6,4.6L8.4,11.4" stroke="#555" stroke-width="2.2"/><path d="M15.4,4.8L8.6,11.2" stroke="#e8e8e8" stroke-width="0.9"/><path d="M8.6,10.6q-1,0.2 -1.6,1.4q-0.8,1.6 -3,1.8q2.6,1.2 4.8,0.2q1.4,-0.8 1.2,-2.2z" fill="#2b7cd3"/></svg>
 <div class="sm" style="left:283.4px;top:61px">Solutyylit</div>
 <svg class="abs" style="left:334px;top:65px" width="9" height="6" viewBox="0 0 9 6"><path d="M2,1.4l2.5,2.5l2.5,-2.5" stroke="#222" stroke-width="1.1" fill="none"/></svg>
 <div class="gl" style="left:300px;top:83px;width:70px">Tyylit</div>
 <!-- Solut -->
 <svg class="abs" style="left:430px;top:3px" width="32" height="32" viewBox="0 0 32 32"><path d="M8.4,3.6h15.4M8.4,1.6v4M23.8,1.6v4" stroke="#2b7cd3" stroke-width="1.1" fill="none"/><rect x="2.2" y="7.6" width="27.6" height="21" fill="#ececec" stroke="#555" stroke-width="1"/><rect x="9.4" y="14.2" width="13.4" height="7.4" fill="#5b9bd5"/><path d="M9.4,7.6v21M22.8,7.6v21M2.2,14.2h27.6M2.2,21.6h27.6" stroke="#555" stroke-width="0.9" fill="none"/></svg>
 <div class="bl" style="left:419px;top:40px;width:54px">Solut</div>
 <svg class="abs" style="left:441px;top:60px" width="9" height="6" viewBox="0 0 9 6"><path d="M1.9,1.4l2.6,2.6l2.6,-2.6" stroke="#222" stroke-width="1.2" fill="none"/></svg>
 <!-- Muokkaus -->
 <svg class="abs" style="left:493px;top:5px" width="34" height="34" viewBox="0 0 34 34"><circle cx="20.4" cy="12.3" r="10" fill="#e6e6e6" stroke="#555" stroke-width="1.1"/><path d="M13.2,19.4L2.4,30.4" stroke="#555" stroke-width="1.2"/></svg>
 <div class="bl" style="left:474px;top:40px;width:72px">Muokkaus</div>
 <svg class="abs" style="left:505px;top:60px" width="9" height="6" viewBox="0 0 9 6"><path d="M1.9,1.4l2.6,2.6l2.6,-2.6" stroke="#222" stroke-width="1.2" fill="none"/></svg>
 <!-- Luottamuksellisuus -->
 <svg class="abs" style="left:596px;top:5px" width="30" height="34" viewBox="0 0 30 34"><path d="M1.5,4.5h14l6.4,6v21h-20.4z" fill="#e2e2e2" stroke="#d2d2d2" stroke-width="0.8"/><g transform="rotate(-45 15 13)"><rect x="5" y="10" width="15" height="6.4" fill="#e2e2e2" stroke="#b8b8b8" stroke-width="1"/><rect x="7.4" y="12.2" width="10" height="2" fill="none" stroke="#b8b8b8" stroke-width="0.8"/><rect x="20" y="8.6" width="4" height="9.2" fill="#b4b4b4"/><rect x="24" y="10.4" width="4.4" height="5.6" fill="#ececec" stroke="#c8c8c8" stroke-width="0.6"/></g></svg>
 <div class="bl" style="left:547px;top:42px;width:122px;color:#8e8e8e">Luottamuksellisuus</div>
 <svg class="abs" style="left:603px;top:63px" width="9" height="6" viewBox="0 0 9 6"><path d="M1.9,1.4l2.6,2.6l2.6,-2.6" stroke="#8e8e8e" stroke-width="1.1" fill="none"/></svg>
 <div class="gl" style="left:547px;top:83px;width:122px">Luottamuksellisuus</div>
 <!-- scroll button -->
 <div class="abs" style="left:672px;top:-1px;width:24px;height:102px;border:1px solid #5e5e5e;background:#c4c4c4"></div>
 <svg class="abs" style="left:680px;top:45px" width="6" height="9" viewBox="0 0 6 9"><path d="M1.6,2l2.5,2.5l-2.5,2.5" stroke="#222" stroke-width="1.1" fill="none"/></svg>
 <svg class="abs" style="left:704px;top:83px" width="12" height="8" viewBox="0 0 12 8"><path d="M1,1.2l5,5l5,-5" stroke="#222" stroke-width="1.1" fill="none"/></svg>
</div>

<!-- formula bar -->
<div class="abs" style="left:9px;top:187px;width:102px;height:26px;border:1px solid #7d7d7d;border-radius:5px;background:#4e4e4e"></div>
<div class="t" style="left:17px;top:192px;font-size:13.4px;color:#fff">F8</div>
<svg class="abs" style="left:92px;top:197px" width="12" height="8" viewBox="0 0 12 8"><path d="M1,1.2l5,5l5,-5" stroke="#fff" stroke-width="1.2" fill="none"/></svg>
<div class="abs" style="left:120px;top:194px;width:2px;height:2px;background:#ddd;box-shadow:0 4.5px 0 #ddd,0 9px 0 #ddd"></div>
<div class="abs" style="left:131px;top:187px;width:86px;height:26px;border:1px solid #7d7d7d;border-radius:5px;background:#4e4e4e"></div>
<svg class="abs" style="left:138px;top:194px" width="12" height="12" viewBox="0 0 12 12"><path d="M0.8,0.8L11.2,11.2M11.2,0.8L0.8,11.2" stroke="#8a8a8a" stroke-width="1.1" fill="none"/></svg>
<svg class="abs" style="left:160px;top:194px" width="15" height="12" viewBox="0 0 15 12"><path d="M0.8,6.6L5,10.8L14.2,1.2" stroke="#8a8a8a" stroke-width="1.1" fill="none"/></svg>
<div class="t" style="left:186px;top:190px;font-family:'Liberation Serif',serif;font-style:italic;font-size:16px;line-height:20px;height:20px;color:#fff;letter-spacing:-0.5px">fx</div>
<svg class="abs" style="left:204px;top:197px" width="11" height="8" viewBox="0 0 11 8"><path d="M1,1.2l4.5,4.6l4.5,-4.6" stroke="#ddd" stroke-width="1.1" fill="none"/></svg>
<div class="abs" style="left:221px;top:187px;width:512px;height:26px;border:1px solid #7d7d7d;border-radius:5px;background:#4e4e4e"></div>
<svg class="abs" style="left:718px;top:194.4px" width="11" height="8" viewBox="0 0 11 8"><path d="M0.8,1.2l4.7,4.7l4.7,-4.7" stroke="#fff" stroke-width="1.2" fill="none"/></svg>


<div id="grid">
<div class="ch" style="left:0;width:718px"></div>
<div class="ch" style="left:25.5px;width:125.8px">A</div>
<div class="ch" style="left:151.3px;width:159.7px">B</div>
<div class="ch" style="left:311.0px;width:109.0px">C</div>
<div class="ch" style="left:420.0px;width:163.2px">D</div>
<div class="ch" style="left:583.2px;width:123.3px">E</div>
<div class="abs" style="left:25.5px;top:0px;width:1px;height:20px;background:#c8c8c8"></div>
<div class="abs" style="left:151.3px;top:0px;width:1px;height:20px;background:#c8c8c8"></div>
<div class="abs" style="left:311.0px;top:0px;width:1px;height:20px;background:#c8c8c8"></div>
<div class="abs" style="left:420.0px;top:0px;width:1px;height:20px;background:#c8c8c8"></div>
<div class="abs" style="left:583.2px;top:0px;width:1px;height:20px;background:#c8c8c8"></div>
<div class="abs" style="left:706px;top:0px;width:1px;height:20px;background:#c8c8c8"></div>
<div class="abs" style="left:707px;top:0;width:12px;height:20px;background:#6a6a6a;border-bottom:2px solid #1e7a45"></div>
<svg class="abs" style="left:9.5px;top:3px" width="14" height="14" viewBox="0 0 14 14"><path d="M13.2,0.8V13.4H0.6z" fill="#f0f0f0"/></svg>
<div class="vg" style="left:151.3px"></div>
<div class="vg" style="left:311.0px"></div>
<div class="vg" style="left:420.0px"></div>
<div class="vg" style="left:583.2px"></div>
<div class="vg" style="left:706px"></div>
<div class="hg" style="top:39px"></div>
<div class="hg" style="top:59px"></div>
<div class="hg" style="top:79px"></div>
<div class="hg" style="top:99px"></div>
<div class="hg" style="top:119px"></div>
<div class="hg" style="top:139px"></div>
<div class="hg" style="top:159px"></div>
<div class="hg" style="top:179px"></div>
<div class="hg" style="top:199px"></div>
<div class="hg" style="top:219px"></div>
<div class="hg" style="top:239px"></div>
<div class="hg" style="top:259px"></div>
<div class="hg" style="top:279px"></div>
<div class="hg" style="top:299px"></div>
<div class="hg" style="top:319px"></div>
<div class="hg" style="top:339px"></div>
<div class="rh" style="top:20px">1</div>
<div class="cl b" style="left:25.5px;top:20px;width:125.8px">T3</div>
<div class="cl b" style="left:151.3px;top:20px;width:159.7px">T4</div>
<div class="cl b" style="left:311.0px;top:20px;width:109.0px">Km-lukema</div>
<div class="cl b" style="left:420.0px;top:20px;width:163.2px">B-mitta</div>
<div class="cl b" style="left:583.2px;top:20px;width:123.3px">Linjan Dz</div>
<div class="rh" style="top:40px">2</div>
<div class="cl na" style="left:25.5px;top:40px;width:125.8px">735</div>
<div class="cl" style="left:151.3px;top:40px;width:159.7px">Opastin AA1</div>
<div class="cl n" style="left:311.0px;top:40px;width:109.0px">206:950,000</div>
<div class="cl n" style="left:420.0px;top:40px;width:163.2px">2,500</div>
<div class="cl n" style="left:583.2px;top:40px;width:123.3px">-0,100</div>
<div class="rh" style="top:60px">3</div>
<div class="cl na" style="left:25.5px;top:60px;width:125.8px">735</div>
<div class="cl" style="left:151.3px;top:60px;width:159.7px">Opastin AA2</div>
<div class="cl n" style="left:311.0px;top:60px;width:109.0px">207:790,000</div>
<div class="cl n" style="left:420.0px;top:60px;width:163.2px">2,500</div>
<div class="cl n" style="left:583.2px;top:60px;width:123.3px">-0,100</div>
<div class="rh" style="top:80px">4</div>
<div class="cl na" style="left:25.5px;top:80px;width:125.8px">735</div>
<div class="cl" style="left:151.3px;top:80px;width:159.7px">Opastin AA3</div>
<div class="cl n" style="left:311.0px;top:80px;width:109.0px">212:355,000</div>
<div class="cl n" style="left:420.0px;top:80px;width:163.2px">2,500</div>
<div class="cl n" style="left:583.2px;top:80px;width:123.3px">-0,100</div>
<div class="rh" style="top:100px">5</div>
<div class="cl na" style="left:25.5px;top:100px;width:125.8px">735</div>
<div class="cl" style="left:151.3px;top:100px;width:159.7px">Opastin AA4</div>
<div class="cl n" style="left:311.0px;top:100px;width:109.0px">213:757,000</div>
<div class="cl n" style="left:420.0px;top:100px;width:163.2px">-2,500</div>
<div class="cl n" style="left:583.2px;top:100px;width:123.3px">-0,100</div>
<div class="rh" style="top:120px">6</div>
<div class="cl na" style="left:25.5px;top:120px;width:125.8px">735</div>
<div class="cl" style="left:151.3px;top:120px;width:159.7px">Opastin AA5</div>
<div class="cl n" style="left:311.0px;top:120px;width:109.0px">214:741,000</div>
<div class="cl n" style="left:420.0px;top:120px;width:163.2px">-2,500</div>
<div class="cl n" style="left:583.2px;top:120px;width:123.3px">-0,100</div>
<div class="rh" style="top:140px">7</div>
<div class="cl na" style="left:25.5px;top:140px;width:125.8px">735</div>
<div class="cl" style="left:151.3px;top:140px;width:159.7px">Opastin AA6</div>
<div class="cl n" style="left:311.0px;top:140px;width:109.0px">214:900,000</div>
<div class="cl n" style="left:420.0px;top:140px;width:163.2px">-2,500</div>
<div class="cl n" style="left:583.2px;top:140px;width:123.3px">-0,100</div>
<div class="rh" style="top:160px;background:#686868;border-right:2px solid #1e7a45">8</div>
<div class="cl na" style="left:25.5px;top:160px;width:125.8px">735</div>
<div class="cl" style="left:151.3px;top:160px;width:159.7px">Opastin AA7</div>
<div class="cl n" style="left:311.0px;top:160px;width:109.0px">216:770,000</div>
<div class="cl n" style="left:420.0px;top:160px;width:163.2px">-2,500</div>
<div class="cl n" style="left:583.2px;top:160px;width:123.3px">-0,100</div>
<div class="rh" style="top:180px">9</div>
<div class="cl na" style="left:25.5px;top:180px;width:125.8px">735</div>
<div class="cl" style="left:151.3px;top:180px;width:159.7px">Opastin AA8</div>
<div class="cl n" style="left:311.0px;top:180px;width:109.0px">217:600,000</div>
<div class="cl n" style="left:420.0px;top:180px;width:163.2px">2,500</div>
<div class="cl n" style="left:583.2px;top:180px;width:123.3px">-0,100</div>
<div class="rh" style="top:200px">10</div>
<div class="cl na" style="left:25.5px;top:200px;width:125.8px">735</div>
<div class="cl" style="left:151.3px;top:200px;width:159.7px">Opastin AA9</div>
<div class="cl n" style="left:311.0px;top:200px;width:109.0px">220:058,000</div>
<div class="cl n" style="left:420.0px;top:200px;width:163.2px">2,500</div>
<div class="cl n" style="left:583.2px;top:200px;width:123.3px">-0,100</div>
<div class="rh" style="top:220px">11</div>
<div class="cl na" style="left:25.5px;top:220px;width:125.8px">735</div>
<div class="cl" style="left:151.3px;top:220px;width:159.7px">Opastin AA10</div>
<div class="cl n" style="left:311.0px;top:220px;width:109.0px">220:527,000</div>
<div class="cl n" style="left:420.0px;top:220px;width:163.2px">2,500</div>
<div class="cl n" style="left:583.2px;top:220px;width:123.3px">-0,100</div>
<div class="rh" style="top:240px">12</div>
<div class="cl na" style="left:25.5px;top:240px;width:125.8px">735</div>
<div class="cl" style="left:151.3px;top:240px;width:159.7px">Opastin AA11</div>
<div class="cl n" style="left:311.0px;top:240px;width:109.0px">221:582,000</div>
<div class="cl n" style="left:420.0px;top:240px;width:163.2px">2,500</div>
<div class="cl n" style="left:583.2px;top:240px;width:123.3px">-0,100</div>
<div class="rh" style="top:260px">13</div>
<div class="cl na" style="left:25.5px;top:260px;width:125.8px">735</div>
<div class="cl" style="left:151.3px;top:260px;width:159.7px">Opastin AA12</div>
<div class="cl n" style="left:311.0px;top:260px;width:109.0px">222:950,000</div>
<div class="cl n" style="left:420.0px;top:260px;width:163.2px">-2,500</div>
<div class="cl n" style="left:583.2px;top:260px;width:123.3px">-0,100</div>
<div class="rh" style="top:280px">14</div>
<div class="cl na" style="left:25.5px;top:280px;width:125.8px">735</div>
<div class="cl" style="left:151.3px;top:280px;width:159.7px">Opastin AA13</div>
<div class="cl n" style="left:311.0px;top:280px;width:109.0px">227:430,000</div>
<div class="cl n" style="left:420.0px;top:280px;width:163.2px">-2,500</div>
<div class="cl n" style="left:583.2px;top:280px;width:123.3px">-0,100</div>
<div class="rh" style="top:300px">15</div>
<div class="cl na" style="left:25.5px;top:300px;width:125.8px">735</div>
<div class="cl" style="left:151.3px;top:300px;width:159.7px">Opastin AA14</div>
<div class="cl n" style="left:311.0px;top:300px;width:109.0px">228:605,000</div>
<div class="cl n" style="left:420.0px;top:300px;width:163.2px">-2,500</div>
<div class="cl n" style="left:583.2px;top:300px;width:123.3px">-0,100</div>
<div class="rh" style="top:320px">16</div>
<div class="abs" style="left:705px;top:159px;width:16px;height:22px;border:2px solid #1e7a45;background:#fff"></div>
</div>
<!-- vertical scrollbar -->
<div class="abs" style="left:722px;top:220px;width:16.8px;height:333px;background:#3b3b3b;border-radius:8.4px;z-index:3"></div>
<div class="abs" style="z-index:4;left:725.8px;top:236.6px;width:9.2px;height:125px;background:#c6c6c6;border-radius:4.6px"></div>
<svg class="abs" style="z-index:4;left:724.4px;top:224.4px" width="12" height="9" viewBox="0 0 12 9"><path d="M6,1.4L10.6,7.6H1.4z" fill="#c6c6c6" stroke="#c6c6c6" stroke-width="0.8" stroke-linejoin="round"/></svg>
<svg class="abs" style="z-index:4;left:724.4px;top:540px" width="12" height="9" viewBox="0 0 12 9"><path d="M6,7.6L10.6,1.4H1.4z" fill="#c6c6c6" stroke="#c6c6c6" stroke-width="0.8" stroke-linejoin="round"/></svg>
<!-- check box -->
<div class="abs" style="left:673px;top:506px;width:38px;height:38px;background:#202226;border:1px solid #e6e6e6;box-shadow:2px 2px 3px rgba(0,0,0,.45)"></div>
<svg class="abs" style="left:684px;top:519px" width="16" height="13" viewBox="0 0 16 13"><path d="M1.2,7L5.6,11.2L14.8,1.4" stroke="#5fc58a" stroke-width="1.5" fill="none"/></svg>
<!-- sheet tab bar -->
<div class="abs" style="left:0;top:550px;width:742px;height:33px;background:#fff"></div>
<div class="abs" style="left:0;top:550px;width:117px;height:33px;background:#4f5049;border-radius:0 6px 0 0"></div>
<div class="abs" style="left:165px;top:550px;width:577px;height:33px;background:#4f5049;border-radius:6px 0 0 0"></div>
<div class="abs" style="left:110px;top:568px;width:62px;height:15px;background:#4f5049"></div>
<div class="abs" style="left:117px;top:550px;width:48px;height:27.5px;background:#fff;border-radius:0 0 5px 5px"></div>
<div class="t" style="left:117px;top:555px;width:48px;text-align:center;color:#222;font-weight:700;font-size:13px;letter-spacing:-0.2px">Taul1</div>
<div class="abs" style="left:125px;top:573px;width:32px;height:2px;background:#1e7a45"></div>
<svg class="abs" style="left:28px;top:559px" width="8" height="12" viewBox="0 0 8 12"><path d="M6.6,1L1.4,6L6.6,11" stroke="#9a9a94" stroke-width="1.2" fill="none"/></svg>
<svg class="abs" style="left:61px;top:559px" width="8" height="12" viewBox="0 0 8 12"><path d="M1.4,1L6.6,6L1.4,11" stroke="#9a9a94" stroke-width="1.2" fill="none"/></svg>
<div class="abs" style="left:169px;top:556px;width:1px;height:18px;background:#8c8c86"></div>
<svg class="abs" style="left:211px;top:559px" width="12" height="12" viewBox="0 0 12 12"><path d="M6,0.5v11M0.5,6h11" stroke="#e4e4e4" stroke-width="1.1" fill="none"/></svg>
<div class="abs" style="left:447px;top:560px;width:2px;height:2px;background:#e0e0e0;box-shadow:0 4.5px 0 #e0e0e0,0 9px 0 #e0e0e0"></div>
<div class="abs" style="left:464px;top:557px;width:258px;height:17px;background:#3b3b3b;border-radius:8.5px"></div>
<div class="abs" style="left:480.5px;top:561px;width:162px;height:9.2px;background:#c6c6c6;border-radius:4.6px"></div>
<svg class="abs" style="left:468px;top:559.6px" width="9" height="12" viewBox="0 0 9 12"><path d="M1,6L8,1V11z" fill="#c4c4c4"/></svg>
<svg class="abs" style="left:709px;top:559.6px" width="9" height="12" viewBox="0 0 9 12"><path d="M8,6L1,1V11z" fill="#c4c4c4"/></svg>
<!-- status bar -->
<div class="abs" style="left:0;top:582px;width:742px;height:23px;background:#555555;border-top:1px solid #4a4a4a"></div>
<div class="t" style="left:12px;top:586px;font-size:11px">Valmis</div>
<svg class="abs" style="left:63px;top:585px" width="18" height="17" viewBox="0 0 18 17"><g fill="none" stroke="#fff" stroke-width="1.1"><circle cx="7" cy="2.8" r="1.9"/><path d="M1.4,6.6q5.6,1.6 11.2,0M5,7.4v3.4l-2.4,4.8M9,7.4v3.4l1,1.6"/><path d="M9.6,13.2l2.2,2.2l4.6,-5" stroke-width="1.3"/></g></svg>
<div class="t" style="left:82.3px;top:586px;font-size:11.6px;-webkit-text-stroke:0.35px #fff;letter-spacing:-0.08px">Helppokäyttöisyys: kaikki kunnossa</div>
<div class="abs" style="left:427px;top:583px;width:40px;height:22px;background:#626262"></div>
<svg class="abs" style="left:439px;top:586px" width="15" height="15" viewBox="0 0 15 15"><g fill="none" stroke="#fff" stroke-width="1" shape-rendering="crispEdges"><rect x="1.5" y="1.5" width="12" height="12"/><path d="M5.5,1.5v12M9.5,1.5v12M1.5,5.5h12M1.5,9.5h12"/></g></svg>
<svg class="abs" style="left:479px;top:586px" width="15" height="15" viewBox="0 0 15 15"><g fill="none" stroke="#fff" stroke-width="1" shape-rendering="crispEdges"><rect x="1.5" y="1.5" width="12" height="12"/><rect x="4.5" y="4.5" width="6" height="6"/><path d="M6,6.5h3M6,8.5h3"/></g></svg>
<svg class="abs" style="left:519px;top:586px" width="15" height="15" viewBox="0 0 15 15"><g fill="none" stroke="#fff" stroke-width="1" shape-rendering="crispEdges"><rect x="1.5" y="0.5" width="12" height="12"/><path d="M5.5,0.5v6h5v-6"/></g></svg>
<svg class="abs" style="left:552px;top:588px" width="180" height="12" viewBox="0 0 180 12"><g stroke="#fff" fill="none" shape-rendering="crispEdges"><path d="M1,6.5h8" stroke-width="1"/><path d="M14,6.5h100" stroke="#bdbdbd" stroke-width="1"/><path d="M119,6.5h9M123.5,2v9" stroke-width="1"/></g><rect x="61.5" y="1" width="5" height="11" fill="#c8c8c8"/></svg>
<div class="t" style="left:692.4px;top:585px;font-size:11.2px;letter-spacing:-0.3px">100 %</div>

</div>

</body>
</html>
